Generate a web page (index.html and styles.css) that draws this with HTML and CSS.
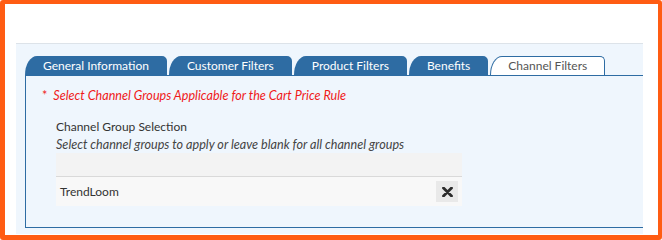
FILE: index.html
```html
<!DOCTYPE html>
<html lang="en">

<head>
    <meta charset="UTF-8">
    <meta name="viewport" content="width=device-width, initial-scale=1.0">
    <title>Cart Price Rule - Channel Filters</title>
    <link rel="stylesheet" href="styles.css">
</head>

<body>
    <div class="frame">
        <div class="panel">
            <ul class="tabs">
                <li class="tab">General Information</li>
                <li class="tab">Customer Filters</li>
                <li class="tab">Product Filters</li>
                <li class="tab">Benefits</li>
                <li class="tab active">Channel Filters</li>
            </ul>
            <div class="tab-body">
                <p class="required"><span class="star">*</span>Select Channel Groups Applicable for the Cart Price Rule</p>
                <div class="field">
                    <div class="field-label">Channel Group Selection</div>
                    <div class="field-hint">Select channel groups to apply or leave blank for all channel groups</div>
                    <div class="picker">
                        <div class="picker-search"></div>
                        <div class="picker-item">
                            <span>TrendLoom</span>
                            <button class="remove" title="Remove">
                                <svg width="11" height="10" viewBox="0 0 11 10">
                                    <path d="M1.5 1 L9.5 9 M9.5 1 L1.5 9" stroke="#2b2b2b" stroke-width="2.8" stroke-linecap="round" />
                                </svg>
                            </button>
                        </div>
                    </div>
                </div>
            </div>
        </div>
    </div>
</body>

</html>
```

FILE: styles.css
```css
body {
    margin: 0;
    background-color: #fff;
    font-family: Lato, "Open Sans", sans-serif;
    font-size: 12px;
    color: #333;
}

.frame {
    width: 662px;
    height: 240px;
    box-sizing: border-box;
    border: solid #ff5c13;
    border-width: 4px 4px 5px 5px;
    border-radius: 3px;
    padding: 39px 15px 2px 11px;
}

.panel {
    height: 191px;
    box-sizing: border-box;
    background-color: #eff6fd;
    border-top: 1px solid #dde3e9;
    padding: 12px 0 6px 9px;
    display: flex;
    flex-direction: column;
}

.tabs {
    list-style: none;
    margin: 0;
    padding: 0;
    display: flex;
    gap: 2px;
    height: 19px;
}

.tab {
    background-color: #2e6ca3;
    color: #fff;
    font-size: 12px;
    line-height: 19px;
    padding: 0 18px;
    border-radius: 12px 5px 0 0 / 19px 5px 0 0;
    white-space: nowrap;
}

.tab.active {
    background-color: #fff;
    color: #555;
    border: 1px solid #2e6ca3;
    border-bottom: none;
    line-height: 18px;
    padding: 0 17px;
}

.tab-body {
    flex: 1;
    border: 1px solid #2e6ca3;
    border-right: none;
    padding: 12px 0 0 16px;
}

.required {
    margin: 0;
    color: #f01a1a;
    font-style: italic;
    font-size: 12.6px;
    line-height: 16px;
}

.required .star {
    font-style: normal;
    margin-right: 6px;
}

.field {
    margin: 14px 0 0 14px;
}

.field-label {
    line-height: 18px;
}

.field-hint {
    font-style: italic;
    font-size: 12.6px;
    color: #444;
    line-height: 17px;
}

.picker {
    width: 406px;
}

.picker-search {
    height: 23px;
    background-color: #f3f3f3;
    border-bottom: 1px solid #d9d9d9;
}

.picker-item {
    height: 29px;
    background-color: #f8f8f8;
    display: flex;
    align-items: center;
    justify-content: space-between;
    padding: 0 4px;
}

.remove {
    width: 22px;
    height: 21px;
    border: none;
    padding: 0;
    background-color: #e9e9e9;
    display: flex;
    align-items: center;
    justify-content: center;
}
```
